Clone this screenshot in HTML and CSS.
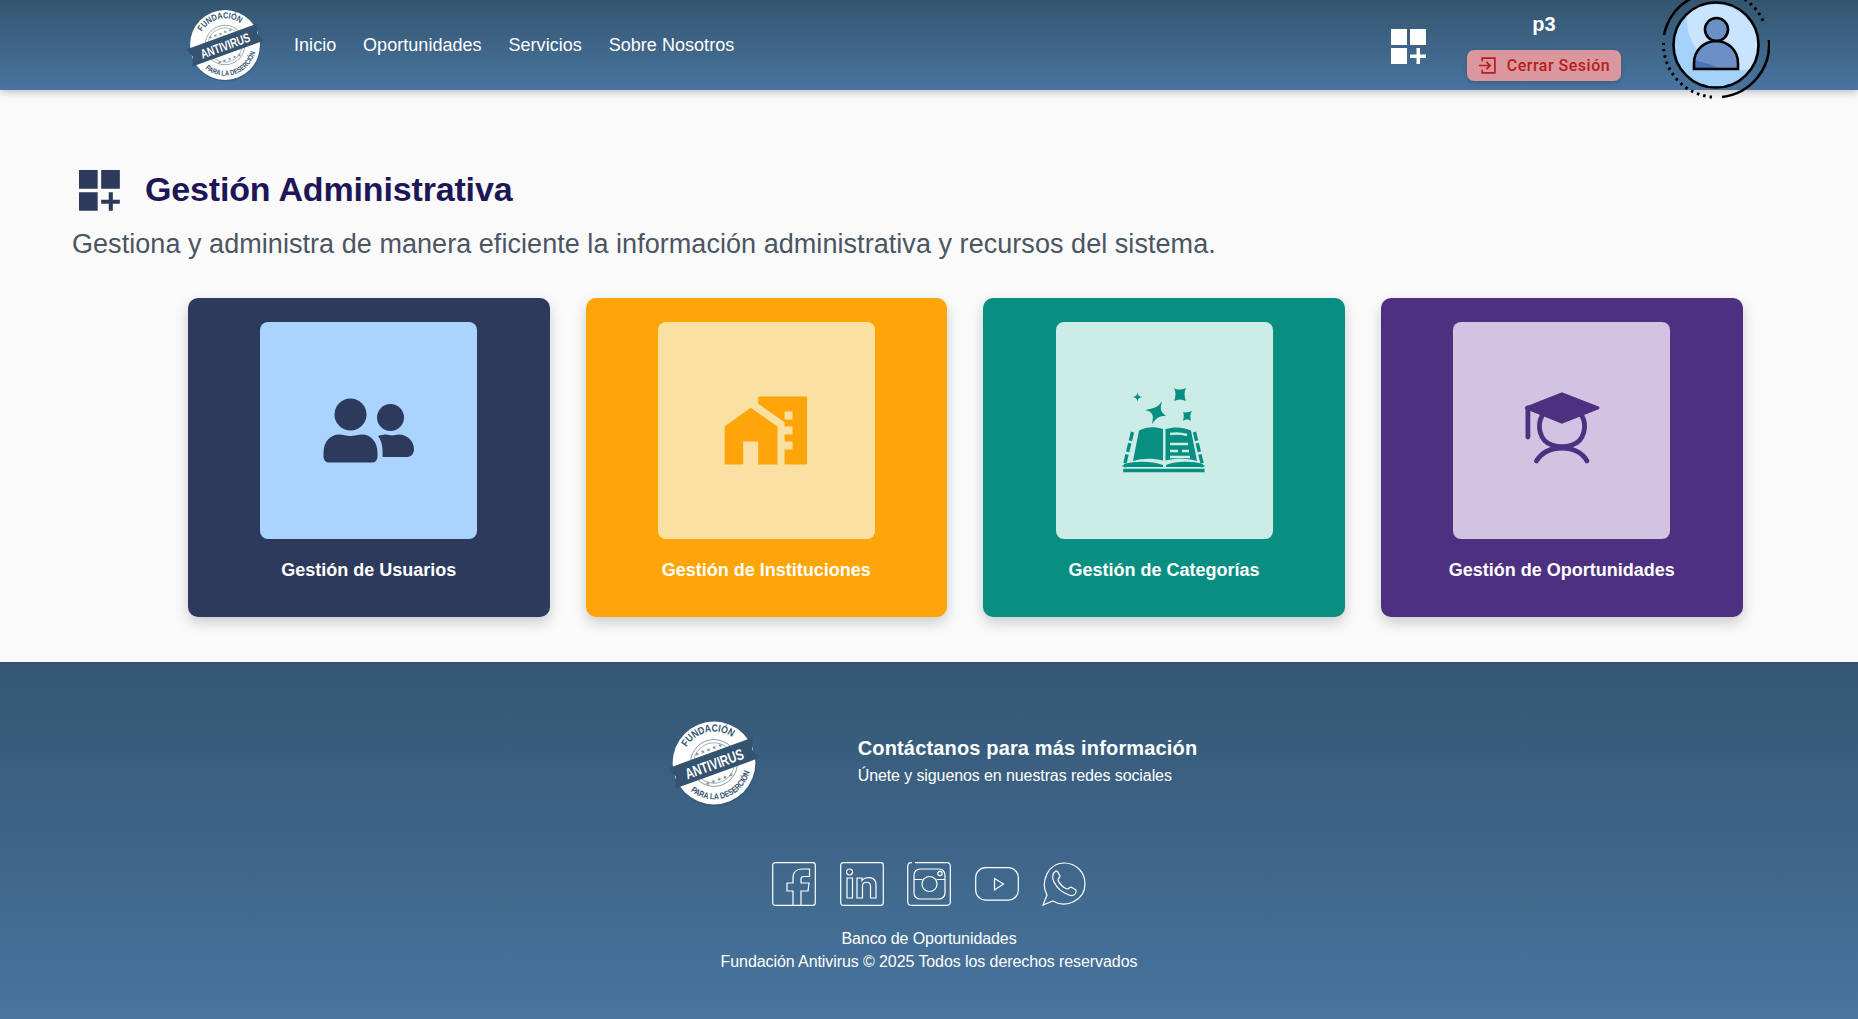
FILE: index.html
```html
<!DOCTYPE html>
<html lang="es">
<head>
  <meta charset="UTF-8">
  <title>Banco de Oportunidades</title>
  <link rel="stylesheet" href="styles.css">
</head>
<body>
  <!-- Sello de la fundación, se reutiliza en cabecera y pie -->
  <svg class="defs" width="0" height="0" aria-hidden="true">
    <defs>
      <path id="arcTop" d="M19.700 32.500 A35 35 0 0 1 70 21.300"/>
      <path id="arcBottom" d="M24 81 A41 41 0 0 0 90.200 57.800"/>
      <symbol id="sello" viewBox="0 0 100 100">
        <circle cx="50.500" cy="51.500" r="46.500" fill="#2f4a66" opacity=".4"/>
        <circle cx="50" cy="50" r="46" fill="#fff"/>
        <circle cx="50" cy="50" r="26" fill="none" stroke="#7d8b99" stroke-width="1"/>
        <circle cx="50" cy="50" r="22.500" fill="none" stroke="#7d8b99" stroke-width=".8"/>
        <text class="sello-arc"><textPath href="#arcTop" textLength="58" lengthAdjust="spacingAndGlyphs">FUNDACIÓN</textPath></text>
        <text class="sello-arc small"><textPath href="#arcBottom" textLength="82" lengthAdjust="spacingAndGlyphs">PARA LA DESERCIÓN</textPath></text>
        <g transform="rotate(-20 50 50)">
          <text class="sello-star" x="50" y="36" text-anchor="middle">★★★★★</text>
          <text class="sello-star" x="50" y="71" text-anchor="middle">★★★★★</text>
          <path d="M0 38 H100 L95 50 L100 62 H0 L5 50 Z" fill="#34536f"/>
          <text class="sello-band" x="50" y="57" text-anchor="middle" textLength="68" lengthAdjust="spacingAndGlyphs">ANTIVIRUS</text>
        </g>
      </symbol>
      <symbol id="gridPlus" viewBox="0 0 36 36">
        <path d="M0 0H16V16H0ZM19 0H35V16H19ZM0 19H16V35H0ZM25.500 19H29V25.500H35V29H29V35H25.500V29H19V25.500H25.500Z"/>
      </symbol>
    </defs>
  </svg>

  <header class="topbar">
    <svg class="logo-top"><use href="#sello"/></svg>
    <nav class="menu">
      <a href="#">Inicio</a>
      <a href="#">Oportunidades</a>
      <a href="#">Servicios</a>
      <a href="#">Sobre Nosotros</a>
    </nav>
    <svg class="admin-link"><use href="#gridPlus"/></svg>
    <div class="user-box">
      <span class="user-name">p3</span>
      <button class="logout">
        <svg width="19" height="19" viewBox="0 0 18 18" fill="none" stroke="#b91c1c" stroke-width="1.600">
          <path d="M4 5V2H16V16H4V13"/>
          <path d="M1 9H11M8 5.500L11.500 9L8 12.500"/>
        </svg>
        Cerrar Sesión
      </button>
    </div>
    <svg class="avatar" viewBox="0 0 108 108" fill="none" stroke="#000">
      <circle cx="54" cy="54" r="43" fill="#a5d2fb" stroke="none"/>
      <path d="M25 23C22 55 50 88 91 77A43.500 43.500 0 0 0 25 23Z" fill="#c8e4ff" stroke="none"/>
      <path d="M32 78V72A22 22 0 0 1 76 72V78Z" fill="#6b90c6" stroke="none"/>
      <path d="M32 78V68C38 72 50 72 58 78Z" fill="#4b74b2" stroke="none"/>
      <circle cx="54.500" cy="38.500" r="11.500" fill="#6b90c6" stroke-width="2.600"/>
      <path d="M32 78V72A22 22 0 0 1 76 72V78Z" stroke-width="2.600"/>
      <circle cx="54" cy="54" r="42.500" stroke-width="2.600"/>
      <path d="M2 44A53 53 0 0 1 28 8M60 106A53 53 0 0 0 107 49" stroke-width="2.600"/>
      <path d="M33 3A53 53 0 0 1 102 32M50 106A53 53 0 0 1 1.500 52" stroke-width="3" stroke-dasharray="2.500 4"/>
    </svg>
  </header>

  <main class="content">
    <div class="page-title">
      <svg class="title-icon"><use href="#gridPlus"/></svg>
      <h1>Gestión Administrativa</h1>
    </div>
    <p class="page-desc">Gestiona y administra de manera eficiente la información administrativa y recursos del sistema.</p>

    <section class="cards">
      <a class="card card-navy" href="#">
        <div class="card-box">
          <svg viewBox="0 0 96 96" fill="#2d3a5c">
            <circle cx="29.500" cy="31.500" r="16"/>
            <circle cx="69.500" cy="34.500" r="13.500"/>
            <path d="M2.500 70C2.500 58 10 51.500 18 51.500C22 51.500 25 53 29.500 53C34 53 37 51.500 41 51.500C50 51.500 56.500 59 56.500 70V74A5.500 5.500 0 0 1 51 79.500H8A5.500 5.500 0 0 1 2.500 74Z"/>
            <path d="M57 53C60 52 63 51.500 65 51.500C67 51.500 69 52.500 71 52.500C73.500 52.500 75 51.500 78 51.500C86 51.500 93 58 93 66C93 71 90 74 86 74H61.500C62 65 61 58 57 53Z"/>
          </svg>
        </div>
        <h2>Gestión de Usuarios</h2>
      </a>
      <a class="card card-orange" href="#">
        <div class="card-box">
          <svg viewBox="0 0 96 96" fill="#fea50a">
            <path d="M6.600 43.500L32.700 24.800L59.500 43.500V81.500H40.200V58.500H25.200V81.500H6.600Z"/>
            <path fill-rule="evenodd" d="M40.200 13.500H89.100V81.500H66.600V66.500H74.500V58.500H66.600V51.500H74.500V43.500H66.600V39.200L40.200 20.800ZM66.600 28.500V36.500H74.500V28.500Z"/>
          </svg>
        </div>
        <h2>Gestión de Instituciones</h2>
      </a>
      <a class="card card-teal" href="#">
        <div class="card-box">
          <svg viewBox="0 0 96 96" fill="#098f82">
            <path d="M46 18C42 24 40 25 29 27C37 29 38 32 36 41C41 34 43 33 50 33C44 28 44 26 46 18Z"/>
            <path d="M21.500 9C21 12.500 20 13.500 16.500 14C20 14.500 21 15.500 21.500 19C22 15.500 23 14.500 26.500 14C23 13.500 22 12.500 21.500 9Z"/>
            <path d="M58 5C61 7 65 7 70 5C68 9 68 13 70 18C66 16 62 16 58 18C60 13 60 9 58 5Z"/>
            <path d="M67 29C70 30 73 29 76 28C74 31 74 34 75 38C72 36 70 36 67 38C68 34 68 31 67 29Z"/>
            <path d="M23 47.500C32 43.500 38 43.500 47 46V77.500C37 75 27 75 17 78Z"/>
            <path d="M49.500 46C59 43.500 66 44 75 47.500L81 78C71 75 60 75 49.500 77.500Z"/>
            <path class="book-lines" d="M54 51C60 50 66 50.500 71 52M54 61H72M54 68H62M66 68H73M54 74H74"/>
            <path class="book-edge" d="M16.500 49L8 84M78.500 49L87 84"/>
            <path d="M8 81C20 78 35 78 47 82V84H8ZM50 82C60 78 75 78 87 81V84H50Z"/>
            <path d="M7.200 85.800H88.600V89.200H7.200Z"/>
          </svg>
        </div>
        <h2>Gestión de Categorías</h2>
      </a>
      <a class="card card-purple" href="#">
        <div class="card-box">
          <svg viewBox="0 0 96 96" fill="none" stroke="#4d3180" stroke-width="4.800" stroke-linecap="round">
            <path d="M28 33C23 42 25 58 38 62C44 64 52 64 58 62C71 58 73 42 68 33"/>
            <path d="M22.400 78C28 69 38 65 48 65C58 65 68 69 73 78"/>
            <path d="M13.900 54V25"/>
            <path d="M48 10.800L84 24.800L48 39.200L12.400 24.800Z" fill="#4d3180" stroke-width="3" stroke-linejoin="round"/>
          </svg>
        </div>
        <h2>Gestión de Oportunidades</h2>
      </a>
    </section>
  </main>

  <footer class="footer">
    <div class="contact">
      <svg class="logo-foot"><use href="#sello"/></svg>
      <div class="contact-text">
        <h3>Contáctanos para más información</h3>
        <p>Únete y siguenos en nuestras redes sociales</p>
      </div>
    </div>

    <div class="social">
      <svg viewBox="0 0 44 44">
        <rect x=".7" y=".7" width="42.600" height="42.600" rx="2.500"/>
        <path d="M21 43.500V29H15V21H21V16C21 10 25 7 30 7H37.500V14.500H32C30 14.500 29 15.500 29 17V21H37L36 29H29V43.500"/>
      </svg>
      <svg viewBox="0 0 44 44">
        <rect x=".7" y=".7" width="42.600" height="42.600" rx="2.500"/>
        <circle cx="9.500" cy="10" r="3"/>
        <path d="M7 16H12.500V36H7Z"/>
        <path d="M17 16H22V18.500C24 15 36 13 36 23V36H30.500V24C30.500 19 22.500 19 22.500 24V36H17Z"/>
      </svg>
      <svg viewBox="0 0 44 44">
        <path d="M8 .7H40A3 3 0 0 1 43.300 4V40A3 3 0 0 1 40 43.300H4A3 3 0 0 1 .7 40V4A3 3 0 0 1 4 .7H5"/>
        <rect x="7" y="7" width="31" height="30" rx="6"/>
        <circle cx="22.500" cy="22" r="7.500"/>
        <circle cx="33" cy="11.500" r="2.200"/>
        <path d="M7 17.500H15.500M29.500 17.500H38"/>
      </svg>
      <svg viewBox="0 0 44 44">
        <rect x=".7" y="5.600" width="42.600" height="32.600" rx="10"/>
        <path d="M19.500 16.500L28.500 22L19.500 28Z"/>
      </svg>
      <svg viewBox="0 0 44 44">
        <path d="M1 43L5 33C-2 20 6 1 22 1C34 1 43 10 43 22C43 38 24 47 11 39Z"/>
        <path d="M14 9C10 11 10 16 12 20C15 26 21 31 27 33C32 35 35 31 34 28L29 25C28 25 27 27 25 27C21 26 17 21 16 18C16 16 18 16 18 14L15.500 9.500Z"/>
      </svg>
    </div>

    <div class="legal">
      <p>Banco de Oportunidades</p>
      <p>Fundación Antivirus © 2025 Todos los derechos reservados</p>
    </div>
  </footer>
</body>
</html>
```

FILE: styles.css
```css
/* Base */
* {
  box-sizing: border-box;
}

html, body {
  margin: 0;
  height: 100%;
}

body {
  display: flex;
  flex-direction: column;
  background: #fafafa;
  font-family: "Liberation Sans", Arial, sans-serif;
  overflow: hidden;
}

a {
  color: inherit;
  text-decoration: none;
}

.defs {
  position: absolute;
}

/* Textos del sello */
.sello-arc {
  font: bold 11.500px "Liberation Sans", Arial, sans-serif;
  fill: #34536f;
}

.sello-arc.small {
  font-size: 9.500px;
}

.sello-star {
  font: 6px "DejaVu Sans", sans-serif;
  letter-spacing: 1.500px;
  fill: #7d8b99;
}

.sello-band {
  font: bold 17px "Liberation Sans", Arial, sans-serif;
  fill: #fff;
}

/* Cabecera */
.topbar {
  flex: none;
  position: relative;
  z-index: 2;
  height: 90px;
  display: flex;
  align-items: center;
  gap: 41px;
  padding: 0 88px 0 187px;
  background: linear-gradient(#34556f, #48749f);
  box-shadow: 0 2px 8px rgba(0, 0, 0, .25);
  color: #fff;
}

.logo-top {
  width: 76px;
  height: 76px;
  flex: none;
  margin-right: -10px;
}

.menu {
  display: flex;
  gap: 26.800px;
  font-size: 18px;
  letter-spacing: .04px;
}

.admin-link {
  width: 36px;
  height: 36px;
  flex: none;
  margin: 3px -1px 0 auto;
  fill: #fff;
}

.user-box {
  width: 154px;
  display: flex;
  flex-direction: column;
  align-items: center;
  gap: 14px;
  padding-top: 4px;
}

.user-name {
  font-size: 20px;
  font-weight: bold;
  line-height: 23px;
}

.logout {
  width: 100%;
  height: 31px;
  display: flex;
  align-items: center;
  justify-content: center;
  gap: 10px;
  border: 0;
  border-radius: 7px;
  background: #da979e;
  box-shadow: 0 2px 5px rgba(0, 0, 0, .15);
  color: #b91c1c;
  font: 500 16px Roboto, sans-serif;
  letter-spacing: .5px;
}

.avatar {
  width: 108px;
  height: 108px;
  flex: none;
}

/* Contenido */
.content {
  flex: none;
  height: 572px;
  padding: 79px 115.400px 0 72px;
}

.page-title {
  display: flex;
  align-items: center;
  gap: 24px;
  height: 42px;
  padding-left: 7px;
}

.title-icon {
  width: 42px;
  height: 42px;
  flex: none;
  margin-top: 2px;
  fill: #2d3a5c;
}

.page-title h1 {
  margin: 0;
  padding-bottom: 2px;
  font-size: 34px;
  line-height: 42px;
  letter-spacing: -.16px;
  color: #1e1656;
}

.page-desc {
  margin: 15px 0 0;
  font-size: 27px;
  line-height: 36px;
  letter-spacing: .05px;
  color: #4b5563;
}

.cards {
  display: grid;
  grid-template-columns: repeat(4, 1fr);
  gap: 36px;
  margin: 36px 0 0 115.800px;
}

.card {
  height: 319px;
  display: flex;
  flex-direction: column;
  align-items: center;
  padding-top: 24px;
  border-radius: 10px;
  box-shadow: 0 6px 14px rgba(0, 0, 0, .18);
}

.card h2 {
  margin: 20px 0 0;
  font-size: 18px;
  line-height: 22px;
  color: #fff;
}

.card-box {
  width: 217px;
  height: 217px;
  display: flex;
  align-items: center;
  justify-content: center;
  border-radius: 8px;
}

.card-box svg {
  width: 96px;
  height: 96px;
}

.card-navy { background: #2d3a5c; }
.card-navy .card-box { background: #aad4ff; }
.card-orange { background: #fea50a; }
.card-orange .card-box { background: #fbe0a3; }
.card-teal { background: #098f82; }
.card-teal .card-box { background: #ccede6; }
.card-purple { background: #4d3180; }
.card-purple .card-box { background: #d2c3e3; }

.book-lines {
  fill: none;
  stroke: #ccede6;
  stroke-width: 2.400;
}

.book-edge {
  fill: none;
  stroke: #098f82;
  stroke-width: 3.400;
  stroke-dasharray: 9 2.500;
}

/* Pie */
.footer {
  flex: 1;
  padding-top: 56px;
  background: linear-gradient(#345672, #48749e);
  color: #fff;
  text-align: center;
}

.contact {
  display: flex;
  align-items: center;
  justify-content: center;
  gap: 99px;
  height: 90px;
  margin-left: 8px;
  text-align: left;
}

.logo-foot {
  width: 90px;
  height: 90px;
  flex: none;
}

.contact-text {
  padding-bottom: 4px;
}

.contact-text h3 {
  margin: 0;
  font-size: 20px;
  line-height: 26px;
  letter-spacing: .16px;
}

.contact-text p {
  margin: 4px 0 0;
  font-size: 16px;
  line-height: 22px;
  letter-spacing: -.1px;
}

.social {
  display: flex;
  justify-content: center;
  gap: 23.500px;
  margin-top: 54px;
}

.social svg {
  width: 44px;
  height: 44px;
  fill: none;
  stroke: #fff;
  stroke-width: 1.200;
}

.legal {
  margin-top: 21px;
  font-size: 16px;
  line-height: 23px;
  letter-spacing: -.085px;
}

.legal p {
  margin: 0;
}
```
